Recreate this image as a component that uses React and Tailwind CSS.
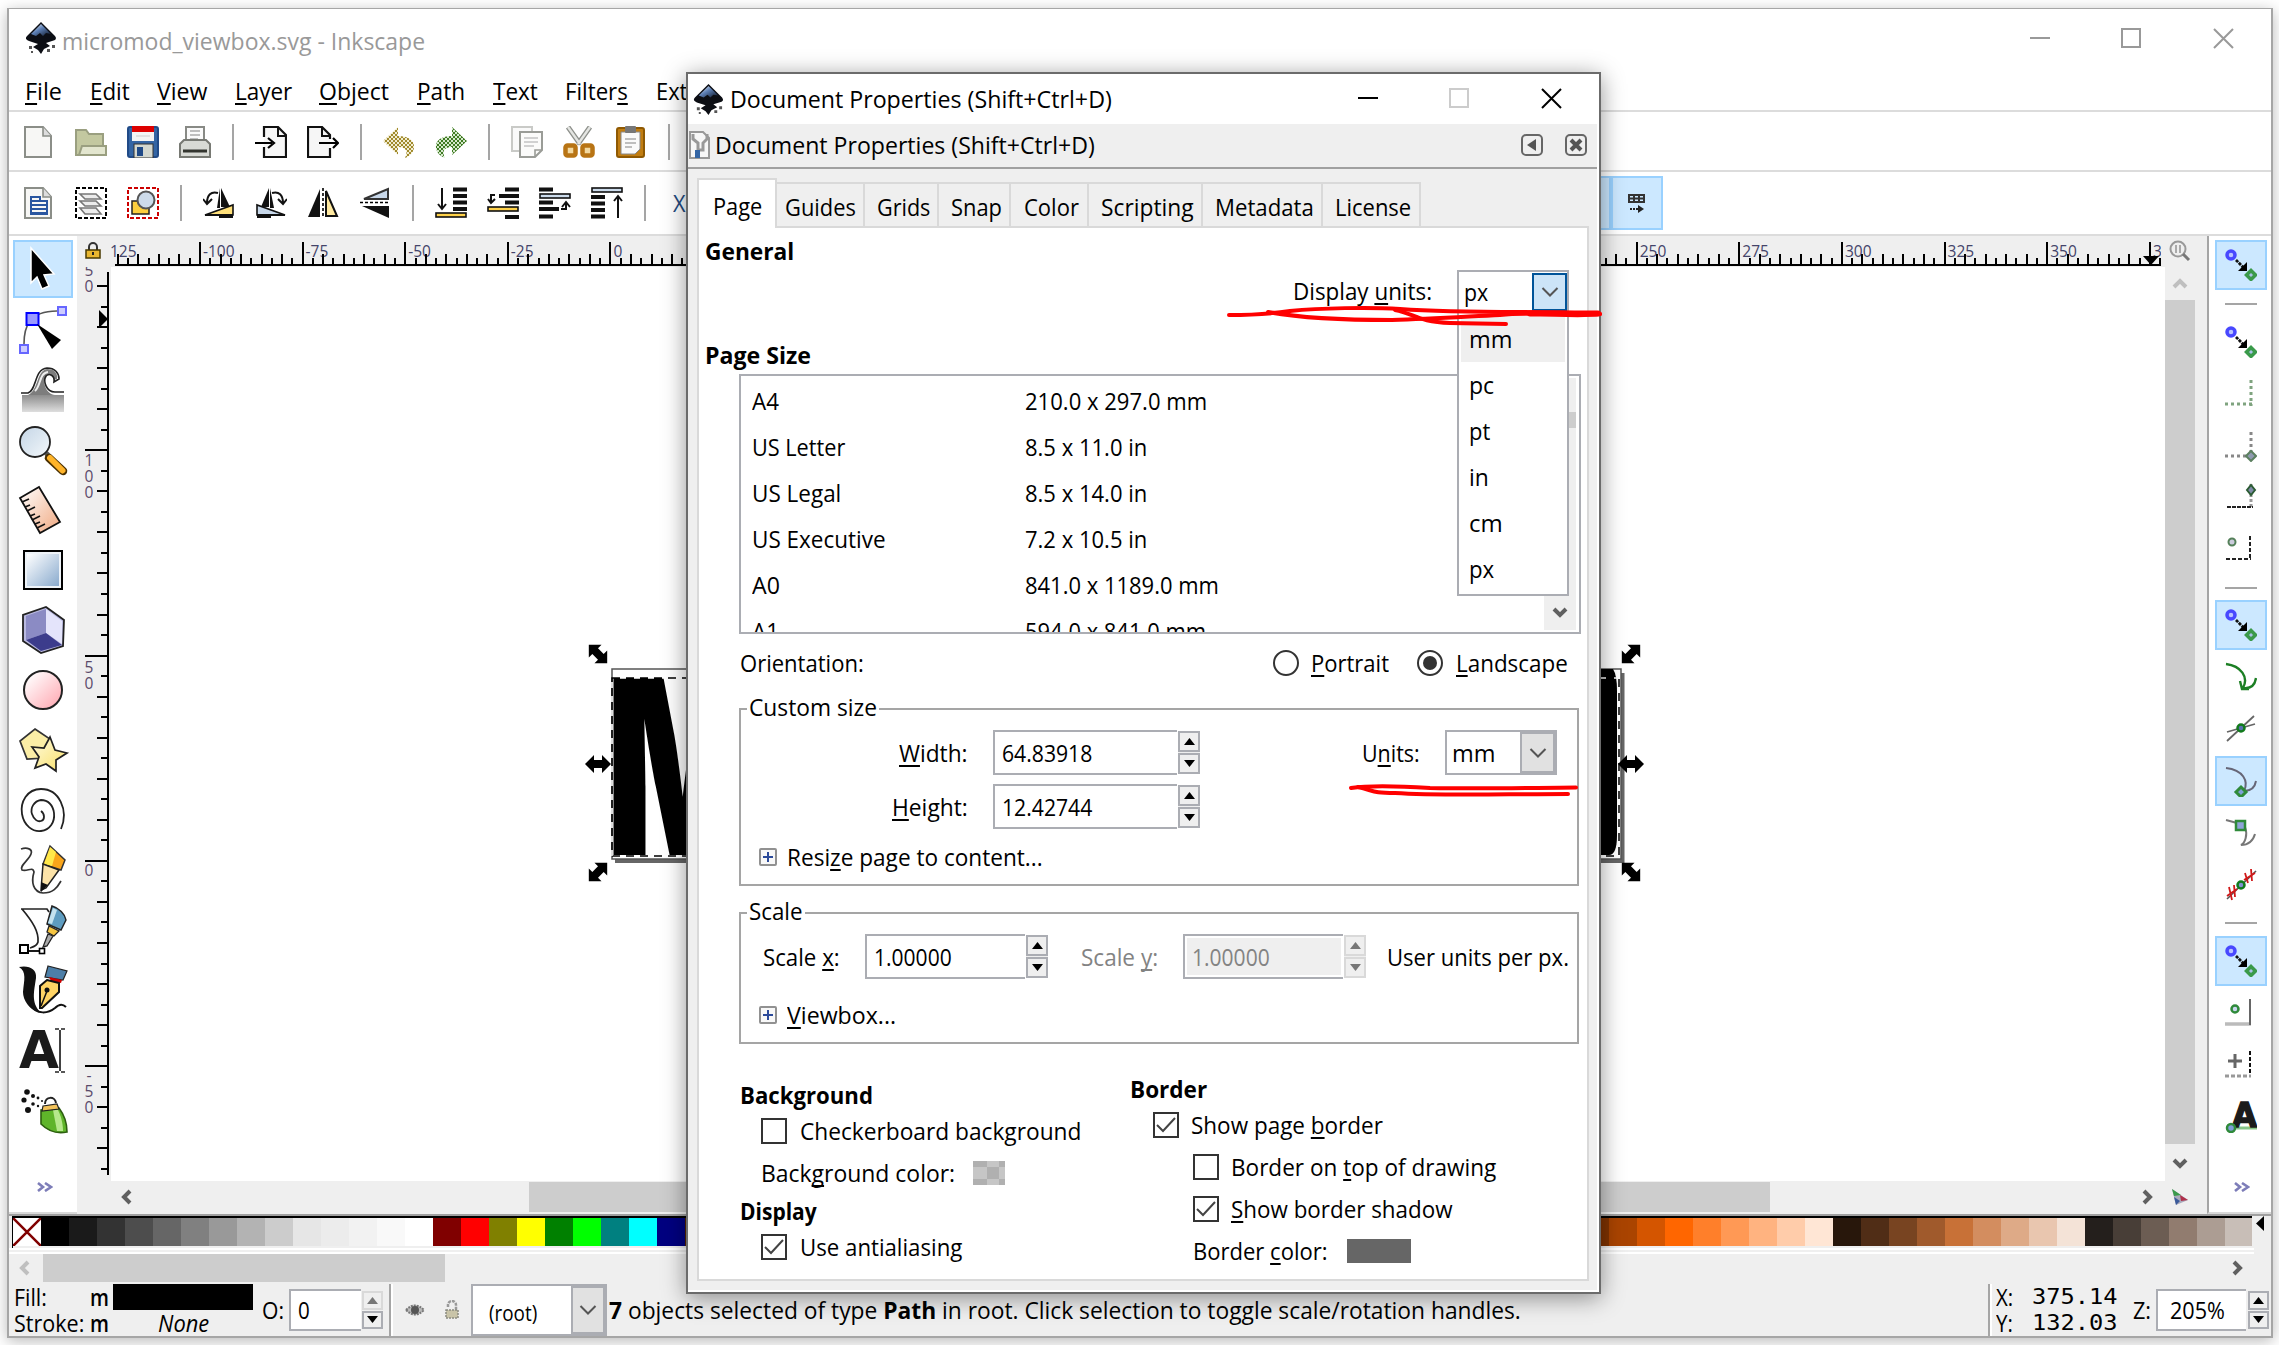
import React, { useLayoutEffect, useRef, useState } from "react";

/* Splits "_X" mnemonics into an underlined letter. */
function mnemonic(s) {
  const i = s.indexOf("_");
  if (i < 0 || s.startsWith("micromod")) return s;
  return (
    <>
      {s.slice(0, i)}
      <span className="underline decoration-2 underline-offset-[3px] [text-decoration-skip-ink:none]">{s[i + 1]}</span>
      {s.slice(i + 2)}
    </>
  );
}

/* Single-line label condensed or widened to a given width. */
function Fit({ w, children, className = "" }) {
  const ref = useRef(null);
  const [k, setK] = useState(1);
  useLayoutEffect(() => {
    const n = ref.current.offsetWidth;
    if (n) setK(w / n);
  }, [w]);
  return (
    <span className={"block shrink-0 whitespace-pre leading-[30px] " + className} style={{ width: w }}>
      <span ref={ref} className="inline-block origin-left" style={{ transform: `scaleX(${k})` }}>
        {typeof children === "string" ? mnemonic(children) : children}
      </span>
    </span>
  );
}

function Logo({ s = 34 }) {
  return (
    <svg width={s} height={s} viewBox="0 0 34 34" className="shrink-0">
      <defs>
        <linearGradient id="lg" x1="0" y1="0" x2="1" y2="1">
          <stop offset="0" stopColor="#fff" />
          <stop offset=".45" stopColor="#5c7fb5" />
          <stop offset="1" stopColor="#0b1220" />
        </linearGradient>
      </defs>
      <path d="M17 1 L31 15 Q34 19 28 20 L22 22 L26 25 L20 28 L17 33 L14 29 L9 26 L14 23 L5 20 Q0 18 3 15 Z" fill="#0c0e14" />
      <path d="M17 3 L27 13 L22 12 L19 15 L16 12 L12 15 L7 13 Z" fill="url(#lg)" />
      <path d="M5 25h3v3h-3z M28 24h3v3h-3z M23 28h3v3h-3z M7 30h2v2h-2z" fill="#555" />
    </svg>
  );
}

const I32 = ({ children }) => (
  <svg width="32" height="32" viewBox="0 0 32 32" fill="none" className="shrink-0">{children}</svg>
);

const Page = ({ x = 2 }) => (
  <g>
    <path d={`M${x} 1h18l8 9v21h-26z`} fill="#f7f7f5" stroke="#8b8e88" strokeWidth="2" />
    <path d={`M${x + 18} 1v9h8`} fill="#ddd" stroke="#8b8e88" strokeWidth="1.6" />
  </g>
);

const cmd = {
  new: <I32><Page /></I32>,
  open: <I32><path d="M1 29V4h10l3 4h14v21z" fill="#c3c8a0" stroke="#9a9f80" strokeWidth="2" /><path d="M4 29l3-9h24v9z" fill="#e3e6cf" stroke="#9a9f80" strokeWidth="2" /></I32>,
  save: <I32><rect x="1" y="1" width="30" height="30" rx="2" fill="#3465a4" stroke="#204a87" strokeWidth="2" /><rect x="5" y="1" width="22" height="14" fill="#f4f4f4" /><rect x="5" y="0" width="22" height="6" fill="#dd0000" /><path d="M9 10h14" stroke="#ccc" /><rect x="7" y="18" width="19" height="14" fill="#d3d7cf" stroke="#333" /><rect x="10" y="21" width="6" height="9" fill="#204a87" /></I32>,
  print: <I32><path d="M7 15V1h18v14" fill="#fafafa" stroke="#888a85" strokeWidth="2" /><path d="M11 5h10M11 9h10M11 13h8" stroke="#aaa" strokeWidth="1.5" /><path d="M1 31V18l4-4h22l4 4v13z" fill="#d8dad5" stroke="#777973" strokeWidth="2" /><path d="M4 25h24" stroke="#33352f" strokeWidth="3" /></I32>,
  imp: <I32><path d="M9 11V1h14l8 8v22H9V21" fill="#f6f6f6" stroke="#111" strokeWidth="2.2" /><path d="M23 1v9h8" stroke="#111" strokeWidth="2" /><path d="M0 17h17M13 12l6 5-6 5" stroke="#000" strokeWidth="2.2" /></I32>,
  exp: <I32><path d="M23 22v9H1V1h14l8 8v4" fill="#f6f6f6" stroke="#111" strokeWidth="2.2" /><path d="M15 1v9h8" stroke="#111" strokeWidth="2" /><path d="M12 17h18M26 12l5 5-5 5" stroke="#000" strokeWidth="2.2" /></I32>,
  undo: <I32><path d="M15 1v9c10 0 17 4 16 12-1 5-4 8-9 10 3-6 2-11-7-11v8L0 15z" fill="url(#hy)" /></I32>,
  redo: <I32><path d="M17 1v9C7 10 0 14 1 22c1 5 4 8 9 10-3-6-2-11 7-11v8l15-14z" fill="url(#hg)" /></I32>,
  copy: <I32><path d="M1 1h20v24H1z" fill="#fafafa" stroke="#c9cac7" strokeWidth="2" /><path d="M9 6h22v18l-7 7H9z" fill="#fbfbfa" stroke="#9a9c97" strokeWidth="2" /><path d="M13 12h14M13 16h14M13 20h10" stroke="#c4c4c4" strokeWidth="1.6" /><path d="M24 31v-7h7" stroke="#9a9c97" strokeWidth="1.6" /></I32>,
  cut: <I32><path d="M5 1l12 17M27 1L15 18" stroke="#8d908b" strokeWidth="5" /><path d="M5 1l12 17M27 1L15 18" stroke="#e4e5e2" strokeWidth="2.4" /><rect x="2.500" y="19.500" width="10" height="10" rx="2" fill="#f3d9a0" stroke="#b87414" strokeWidth="4.500" /><rect x="19.500" y="19.500" width="10" height="10" rx="2" fill="#f3d9a0" stroke="#b87414" strokeWidth="4.500" /></I32>,
  paste: <I32><rect x="2" y="2" width="27" height="29" rx="2" fill="#c17d11" stroke="#8f5902" strokeWidth="2" /><path d="M6 6h19v17l-5 5H6z" fill="#fafafa" stroke="#888" /><rect x="10" y="0" width="11" height="7" rx="1" fill="#777" /><path d="M10 13h11M10 17h11M10 21h7" stroke="#aaa" strokeWidth="1.5" /></I32>,
};

const ctl = {
  doc: <I32><Page /><path d="M8 10h9v4h7M8 14h16M8 18h16M8 22h16M8 26h16M8 9v18h16V13" stroke="#2a56a0" strokeWidth="2" /></I32>,
  layers: <I32><rect x="1" y="1" width="30" height="30" stroke="#000" strokeWidth="2" strokeDasharray="4 2" /><path d="M5 7h16l5 5H10z M5 14h16l5 5H10z M5 21h16l5 6H10z" fill="#ececec" stroke="#777" strokeWidth="1.6" /></I32>,
  objs: <I32><rect x="1" y="1" width="30" height="30" stroke="#c00" strokeWidth="2" strokeDasharray="4 2" /><rect x="5" y="14" width="17" height="13" fill="#fccf3e" stroke="#222" strokeWidth="1.5" /><circle cx="19" cy="13" r="8.5" fill="#cddbea" stroke="#555" strokeWidth="2" /></I32>,
  rl: <I32><path d="M18 1v19h9z" fill="#111" /><path d="M17 1v20h-3z" fill="#111" /><path d="M2 28L30 18v10z" fill="#ffe07a" stroke="#111" strokeWidth="1.6" /><path d="M2 27h28v2H2zM16 29h14v2H16z" fill="#111" /><path d="M15 6C8 4 4 8 4 16M0 12l4 5 5-5" stroke="#111" strokeWidth="2" /></I32>,
  rr: <I32><path d="M14 1v19H6z" fill="#111" /><path d="M15 1v20h4z" fill="#111" /><path d="M30 28L2 18v10z" fill="#c8d8ea" stroke="#111" strokeWidth="1.6" /><path d="M2 27h28v2H2zM2 29h14v2H2z" fill="#111" /><path d="M17 6c7-2 11 2 11 10M32 12l-4 5-5-5" stroke="#111" strokeWidth="2" /></I32>,
  fh: <I32><path d="M13 2v28H1z" fill="#111" /><path d="M19 4v25h11z" fill="#ffe9a0" stroke="#111" strokeWidth="2" /><path d="M16 1v30" stroke="#000" strokeWidth="1.6" strokeDasharray="3 2" /></I32>,
  fv: <I32><path d="M30 19v12L3 19z" fill="#111" /><path d="M29 2v10H5z" fill="#c8d8ea" stroke="#333" strokeWidth="2" /><path d="M1 15.5h30" stroke="#000" strokeWidth="1.6" strokeDasharray="3 2" /></I32>,
  bot: <I32><path d="M18 2.500h14M18 9h14M18 15.500h14M18 22h14" stroke="#111" strokeWidth="4" /><rect x="1" y="26" width="30" height="4" fill="#ffd24a" stroke="#111" strokeWidth="1.6" /><path d="M7 1v20M3 17l4 5 4-5" stroke="#111" strokeWidth="2" /></I32>,
  low: <I32><path d="M18 2.500h14M12 9h20M18 15.500h14M18 30h14" stroke="#111" strokeWidth="4" /><rect x="1" y="20" width="30" height="4" fill="#ffd24a" stroke="#111" strokeWidth="1.600" /><path d="M8 8H4v7M1 12l3 4 4-4" stroke="#111" strokeWidth="2" /></I32>,
  up: <I32><path d="M0 2.500h14M0 15.500h14M0 22h20M0 29.500h14" stroke="#111" strokeWidth="4" /><rect x="1" y="7" width="30" height="4" fill="#cddcec" stroke="#111" strokeWidth="1.6" /><path d="M22 22h5v-6M23 20l4-5 4 5" stroke="#111" strokeWidth="2" /></I32>,
  top: <I32><path d="M0 10h14M0 16.500h14M0 23h14M0 29.500h14" stroke="#111" strokeWidth="4" /><rect x="1" y="1" width="30" height="4" fill="#cddcec" stroke="#111" strokeWidth="1.6" /><path d="M27 31V10M23 14l4-5 4 5" stroke="#111" strokeWidth="2" /></I32>,
};

function Bar({ items, set }) {
  return items.map((n, i) =>
    n === "|" ? (
      <div key={i} className="flex w-6 justify-center"><div className="h-9 w-0.5 bg-[#a5a5a5]" /></div>
    ) : (
      <div key={i} className="flex w-[52px] justify-center">{set[n]}</div>
    )
  );
}

const I48 = ({ children }) => (
  <svg width="48" height="48" viewBox="0 0 48 48" fill="none" className="shrink-0 overflow-visible">{children}</svg>
);

const tools = [
  <I48><path d="M12 3V38L18 32L23 44L30 41L25 30L35 29Z" fill="#000" stroke="#fff" strokeWidth="1.5" /></I48>,
  <I48><path d="M5 38C5 22 9 5 38 5" stroke="#555" strokeWidth="1.6" /><rect x="7.500" y="7" width="12" height="12" fill="#9a9aff" stroke="#00f" strokeWidth="2" /><rect x="39" y="1" width="8" height="8" fill="#ccf" stroke="#66f" strokeWidth="2" /><rect x="1" y="39" width="8" height="8" fill="#ccf" stroke="#66f" strokeWidth="2" /><path d="M18 18L42 34L33 43Z" fill="#000" /></I48>,
  <I48><path d="M3 29H45V46H3Z" fill="url(#gw)" /><path d="M9 29C20 24 17 5 28 3C36 3 39 8 38 13L35 14C34 8 29 8 27 11C23 16 27 28 36 29Z" fill="#7d7d7d" /><path d="M2 27H9C18 24 15 3 28 2C36 2 40 7 40 13L35 16C36 9 30 7 27 10C24 15 27 26 36 26H45" stroke="#222" strokeWidth="1.600" /><path d="M16 25C22 20 20 7 29 6" stroke="#eee" strokeWidth="2" /></I48>,
  <I48><path d="M27 27L33 33" stroke="#555" strokeWidth="5" /><path d="M30 32L44 45" stroke="#4a3000" strokeWidth="8.500" strokeLinecap="round" /><path d="M31 32L43.500 44.500" stroke="#ffb42a" strokeWidth="6" strokeLinecap="round" /><circle cx="16" cy="16" r="15" fill="url(#gz)" stroke="#222" strokeWidth="1.800" /></I48>,
  <I48><path d="M1 12L20 1L41 36L21 47Z" fill="url(#gm)" stroke="#111" strokeWidth="1.800" /><path d="M3 16l7-3M6 21l5-2M8 25l8-4M11 30l5-2M13 34l8-4M16 38l5-2M18 42l8-4" stroke="#111" strokeWidth="1.600" /></I48>,
  <I48><rect x="5" y="5" width="38" height="38" fill="#eef3f8" stroke="#000" strokeWidth="2" /><rect x="8" y="8" width="32" height="32" fill="url(#gr)" /></I48>,
  <I48><path d="M27 1L45 14L44 40L22 47L4 35V9Z" fill="#b9b9e0" stroke="#222" strokeWidth="1.800" /><path d="M27 3V27L43 38V15Z" fill="#e4e4fb" /><path d="M27 3V27L7 34V10Z" fill="#8b8bc4" /><path d="M27 27L43 39L22 45L7 34Z" fill="#3c3c8c" /></I48>,
  <I48><circle cx="24" cy="24" r="19" fill="url(#gc)" stroke="#222" strokeWidth="2" /></I48>,
  <I48><path d="M16 3L31 13L26 32L8 33L1 15Z" fill="#fbeea6" stroke="#333" strokeWidth="1.700" /><path d="M31 11L36 24L48 27L37 34V45L27 38L16 42L20 31L13 21L25 22Z" fill="url(#gs)" stroke="#222" strokeWidth="1.700" /></I48>,
  <I48><path d="M42 43C50 24 40 3 22 3C8 3 1 16 3 28C5 40 14 46 22 45C31 44 36 36 35 27C34 19 29 14 22 14C15 15 11 22 13 28C15 34 19 36 22 35C26 34 26 28 22 25" stroke="#222" strokeWidth="1.800" /></I48>,
  <I48><path d="M2 3C8 1 14 3 12 8C10 14 0 20 3 24C8 26 14 20 15 26C12 36 14 46 24 47C34 47 38 42 42 35" stroke="#333" strokeWidth="1.700" /><path d="M31 0L46 14L42 24L24 18Z" fill="#f9a51a" stroke="#333" strokeWidth="1.500" /><path d="M31 1L37 6L33 20L25 18Z" fill="#ffe84a" /><path d="M24 18L40 24L27 42L22 44Z" fill="#fce3a8" stroke="#222" strokeWidth="1.500" /><path d="M22 36L29 39L22 46Z" fill="#111" /></I48>,
  <I48><path d="M2 3H28L30 6M3 3C14 16 20 26 19 36C18 40 14 41 11 42" stroke="#222" strokeWidth="1.700" /><path d="M33 0C40 2 46 8 47 14L42 24L28 18Z" fill="#5e9cc0" stroke="#222" strokeWidth="1.500" /><path d="M34 2L38 4L33 18L29 17Z" fill="#c4e2ee" /><path d="M30 20L40 25L35 30L28 26Z" fill="#f5c542" stroke="#222" strokeWidth="1.300" /><path d="M29 28L34 30L28 40L24 41Z" fill="#aaa" stroke="#222" strokeWidth="1.300" /><rect x="1" y="39" width="8" height="8" fill="#fff" stroke="#000" strokeWidth="2" /><rect x="20.500" y="42.500" width="5" height="5" fill="#fff" stroke="#000" strokeWidth="1.600" /><path d="M9 45H20" stroke="#000" strokeWidth="1.800" /></I48>,
  <I48><path d="M0 1C10 -1 18 3 17 12C15 26 12 36 21 46C10 44 4 34 4 26C5 14 8 6 0 1Z" fill="#111" /><path d="M10 38C18 50 30 47 36 42C40 38 44 38 47 41" stroke="#111" strokeWidth="2" /><path d="M29 0L48 5L44 14L26 11Z" fill="#4d7fa8" stroke="#222" strokeWidth="1.200" /><path d="M30 11L43 14L42 17L32 15Z" fill="#c00" /><path d="M28 14L40 17V26L23 42H21V20Z" fill="#ffd465" stroke="#111" strokeWidth="2" /><path d="M22 40L28 25" stroke="#111" strokeWidth="1.500" /><circle cx="28" cy="24" r="2.500" fill="#111" /></I48>,
  <I48><text x="0" y="42" textLength="40" lengthAdjust="spacingAndGlyphs" fontFamily="DejaVu Sans" fontWeight="700" fontSize="52" fill="#1b1b1b">A</text><path d="M41 4V45M36 3H40M42 3H46M36 46H40M42 46H46" stroke="#222" strokeWidth="1.700" /></I48>,
  <I48><path d="M22 24L40 22C46 30 48 40 48 46C38 48 30 46 22 38Z" fill="#5fb52a" stroke="#2d5f10" strokeWidth="1.600" /><path d="M34 24L39 24C43 32 44 40 44 45L38 45Z" fill="#b6e88c" /><path d="M24 20L38 18L40 23L23 25Z" fill="#f2c25a" stroke="#222" strokeWidth="1.200" /><path d="M26 18C26 10 36 10 37 17" stroke="#222" strokeWidth="2" /><g fill="#111"><circle cx="8" cy="6" r="2.800" /><circle cx="5" cy="14" r="2.600" /><circle cx="9" cy="24" r="3" /><circle cx="14" cy="10" r="2" /><circle cx="14" cy="18" r="1.800" /><circle cx="19" cy="12" r="1.400" /><circle cx="19" cy="20" r="1.200" /><circle cx="23" cy="15" r="1" /></g></I48>,
];

const SnapMain = (
  <I32><circle cx="6" cy="6" r="4" fill="#b9c3ff" stroke="#4848ff" strokeWidth="3.500" /><path d="M11 11L20 20" stroke="#111" strokeWidth="2.800" strokeDasharray="3 1" /><path d="M22 13V22H13Z" fill="#000" /><path d="M26 21.500L30.500 26L26 30.500L21.500 26Z" fill="#a9c0e8" stroke="#3a9a4a" strokeWidth="3.500" /></I32>
);
const g = "#2f8a3a";
const snaps = [
  ["on", SnapMain], ["|", "h-[25px]"],
  ["", SnapMain],
  ["", <I32><path d="M26 2V28M0 26H28" stroke="#7fa37f" strokeWidth="3" strokeDasharray="3 3" /></I32>],
  ["", <I32><path d="M26 2V26M0 26H26" stroke="#888" strokeWidth="3" strokeDasharray="3 3" /><path d="M26 21L31 26L26 31L21 26Z" fill="#8f9ab0" stroke="#5c8060" strokeWidth="2" /></I32>],
  ["", <I32><path d="M26 2V26" stroke="#999" strokeWidth="3" strokeDasharray="3 2" /><path d="M2 25H28" stroke="#222" strokeWidth="2" strokeDasharray="4 1" /><path d="M26 3L30 8L26 13L22 8Z" fill="#7f8aa8" stroke="#2c5c34" strokeWidth="2" /></I32>],
  ["", <I32><path d="M25 2V26M1 25H26" stroke="#222" strokeWidth="2" strokeDasharray="4 2" /><circle cx="7" cy="8" r="3.500" fill="#ccd" stroke="#55805a" strokeWidth="2" /></I32>],
  ["|", "h-[23px]"],
  ["on", SnapMain],
  ["", <I32><path d="M1 3C16 5 24 16 18 27C26 28 30 24 31 17M15 20L17 28L24 28" stroke="#1c7f24" strokeWidth="2.400" /></I32>],
  ["", <I32><path d="M2 28L29 3M2 19L30 11" stroke="#666" strokeWidth="1.800" /><circle cx="16" cy="15" r="3.500" fill="#5a6fb0" stroke="#117a1c" strokeWidth="2.500" /></I32>],
  ["on", <I32><path d="M1 3C18 5 24 16 19 26C26 26 30 22 31 16" stroke="#667" strokeWidth="2" /><path d="M16 22L21 27L16 32L11 27Z" fill="#7f9fd8" stroke={g} strokeWidth="3" /></I32>],
  ["", <I32><path d="M1 3L12 6M20 10C23 18 20 26 16 28C24 28 28 24 30 17" stroke="#777" strokeWidth="2" /><rect x="11" y="4" width="9" height="9" fill="#8fa3d8" stroke={g} strokeWidth="2.500" /></I32>],
  ["", <I32><path d="M2 30L31 2" stroke="#555" strokeWidth="1.600" /><path d="M4 18L7 31M9 16L10 28M2 27L12 20M20 4L23 14M26 0L27 12M19 11L30 4" stroke="#d01818" strokeWidth="1.800" /><circle cx="16" cy="16" r="3.500" fill="#7f8fd0" stroke="#117a1c" strokeWidth="2.500" /></I32>],
  ["|", "h-6"],
  ["on", SnapMain],
  ["", <I32><path d="M0 27H26" stroke="#bbb" strokeWidth="3.500" /><path d="M25 2V28" stroke="#666" strokeWidth="2" /><circle cx="10" cy="12" r="3.500" fill="#c9d6f0" stroke={g} strokeWidth="2.500" /></I32>],
  ["", <I32><path d="M25 2V28" stroke="#111" strokeWidth="2" strokeDasharray="4 2" /><path d="M0 27H26" stroke="#999" strokeWidth="3" strokeDasharray="4 2" /><path d="M10 5V19M3 12H17" stroke="#666" strokeWidth="3" /></I32>],
  ["", <I32><path d="M4 27H32" stroke="#86c586" strokeWidth="3" /><text x="7" y="26" textLength="25" lengthAdjust="spacingAndGlyphs" fontFamily="DejaVu Sans" fontWeight="700" fontSize="34" fill="#1b1b1b" stroke="#1b1b1b" strokeWidth="1.500">A</text><circle cx="6" cy="27" r="4" fill="#7f9fd8" stroke={g} strokeWidth="2.500" /></I32>],
];

const Chev = ({ d, c = "#606060" }) => (
  <svg width="16" height="16" viewBox="0 0 16 16" fill="none" className="shrink-0">
    <path d={{ l: "M11 2L5 8l6 6", r: "M5 2l6 6-6 6", u: "M2 11l6-6 6 6", d: "M2 5l6 6 6-6" }[d]} stroke={c} strokeWidth="4" />
  </svg>
);
const More = () => (
  <svg width="16" height="10" viewBox="0 0 16 10" fill="none"><path d="M1 1l5 4-5 4M8 1l6 4-6 4" stroke="#7d7db8" strokeWidth="2.600" /></svg>
);

function HRuler() {
  const ticks = [];
  for (let k = -8; k <= 191; k++) {
    const x = 89 + k * 10.262;
    const n = ((k % 10) + 10) % 10;
    ticks.push(<path key={k} d={`M${Math.round(x)} ${n === 0 ? 6 : n % 2 ? 22 : 18}V29`} stroke="#000" strokeWidth="2" />);
  }
  const labels = [-100, -75, -50, -25, 0, 250, 275, 300, 325, 350].map((m) => (
    <text key={m} x={89 + ((m + 100) / 25) * 102.62 + 3} y="21">{m}</text>
  ));
  return (
    <svg width="2054" height="31" viewBox="0 0 2054 31" fontFamily="Open Sans" fontSize="15.500" fill="#44446a">
      <text x="-1" y="21">125</text>
      {labels}
      <text x="2042" y="21">3</text>
      <g>{ticks}</g>
      <path d="M4 29H2050" stroke="#000" strokeWidth="2" />
      <path d="M2032 20h16l-8 9z" fill="#000" />
      <path d="M2050 0h4v31h-4z" fill="#efefef" />
    </svg>
  );
}

function VRuler() {
  const ticks = [];
  for (let k = 2; k <= 45; k++) {
    const y = -22 + k * 20.53;
    const long = k % 10 === 0;
    ticks.push(<path key={k} d={`M${long ? 8 : k % 2 ? 24 : 20} ${Math.round(y)}H31`} stroke="#000" strokeWidth="2" />);
  }
  const col = (s, y) => s.split("").map((c, i) => <text key={c + y + i} x="12" y={y + i * 15.9} textAnchor="middle">{c}</text>);
  return (
    <svg width="34" height="914" viewBox="0 0 34 914" fontFamily="Open Sans" fontSize="15.500" fill="#5a4a6a">
      {ticks}
      <path d="M31 5V908" stroke="#000" strokeWidth="2" />
      <path d="M22 43v18l9-9z" fill="#000" />
      {col("50", 9)}{col("100", 199)}{col("50", 406)}{col("0", 609)}{col("-50", 814)}
    </svg>
  );
}

function Canvas() {
  const handle = (x, y, r, key) => (
    <path key={key} transform={`translate(${x} ${y}) rotate(${r})`} d="M-13 0L-4 -9V-4H4V-9L13 0L4 9V4H-4V9Z" fill="#000" />
  );
  return (
    <svg width="2054" height="914" viewBox="0 0 2054 914" className="block bg-white">
      <path d="M504 594H1511.500V406" stroke="#666" strokeWidth="4" fill="none" />
      <rect x="501" y="402" width="1009" height="190" fill="#fff" stroke="#555" strokeWidth="1.500" />
      <g transform="translate(495 588) scale(.66 1)">
        <text x="0" y="0" fontFamily="Inter" fontWeight="900" fontSize="243">M</text>
      </g>
      <path d="M1470 402H1502Q1506 408 1506 424V568Q1506 588 1498 588H1470Z" fill="#000" />
      <rect x="501" y="411" width="1007" height="178" fill="none" stroke="#000" strokeWidth="1.500" strokeDasharray="8 6" />
      <rect x="501" y="411" width="1007" height="178" fill="none" stroke="#fff" strokeWidth="1.500" strokeDasharray="6 8" strokeDashoffset="6" />
      {[[487, 387, 45], [487, 497, 0], [487, 605, -45], [1520, 387, -45], [1520, 497, 0], [1520, 605, 45]].map((h, i) => handle(h[0], h[1], h[2], i))}
    </svg>
  );
}

const leftSw = ["bg-[#000]", "bg-[#1a1a1a]", "bg-[#333]", "bg-[#4d4d4d]", "bg-[#666]", "bg-[#808080]", "bg-[#999]", "bg-[#b3b3b3]", "bg-[#ccc]", "bg-[#e6e6e6]", "bg-[#ececec]", "bg-[#f2f2f2]", "bg-[#f9f9f9]", "bg-[#fff]", "bg-[#800000]", "bg-[#f00]", "bg-[#808000]", "bg-[#ff0]", "bg-[#008000]", "bg-[#0f0]", "bg-[#008080]", "bg-[#0ff]", "bg-[#000080]"];
const rightSw = ["bg-[#803300]", "bg-[#aa4400]", "bg-[#d45500]", "bg-[#ff6600]", "bg-[#ff7f2a]", "bg-[#ff9955]", "bg-[#ffb380]", "bg-[#ffccaa]", "bg-[#ffe6d5]", "bg-[#28170b]", "bg-[#502d16]", "bg-[#784421]", "bg-[#a05a2c]", "bg-[#c87137]", "bg-[#d38d5f]", "bg-[#deaa87]", "bg-[#e9c6af]", "bg-[#f4e3d7]", "bg-[#241f1c]", "bg-[#483e37]", "bg-[#6c5d53]", "bg-[#917c6f]", "bg-[#ac9d93]", "bg-[#c8beb7]"];

const Tri = ({ up, c }) => (
  <svg width="11" height="7" viewBox="0 0 11 7"><path d={up ? "M0 7L5.500 0L11 7Z" : "M0 0L5.500 7L11 0Z"} fill={c} /></svg>
);
function Spin({ off, upOff, narrow }) {
  const b = "flex flex-1 items-center justify-center border-2 ";
  return (
    <div className={"flex shrink-0 flex-col gap-px bg-[#efefef] " + (narrow ? "h-[38px] w-[21px]" : "h-[43px] w-[22px]")}>
      <div className={b + (off || upOff ? "border-[#d9d9d9]" : "border-[#abadb3]")}><Tri up c={off || upOff ? "#777" : "#000"} /></div>
      <div className={b + (off ? "border-[#d9d9d9]" : "border-[#abadb3]")}><Tri c={off ? "#777" : "#000"} /></div>
    </div>
  );
}
function Entry({ w, text, tw, off }) {
  return (
    <div className="flex h-[45px] shrink-0 items-center">
      <div className="flex h-[45px] items-center border-2 border-r-0 border-[#abadb3] bg-white p-[2px]" style={{ width: w }}>
        <div className={"flex h-full w-full items-center pl-[5px] " + (off ? "bg-[#efefef] text-[#838383]" : "")}><Fit w={tw}>{text}</Fit></div>
      </div>
      <div className="ml-px"><Spin off={off} /></div>
    </div>
  );
}
const Down = () => (
  <svg width="18" height="12" viewBox="0 0 18 12" fill="none"><path d="M1.500 2L9 9.500L16.500 2" stroke="#555" strokeWidth="2" /></svg>
);
function Check({ on }) {
  return (
    <div className="flex h-[26px] w-[26px] shrink-0 items-center justify-center border-2 border-[#333] bg-white">
      {on && <svg width="20" height="18" viewBox="0 0 20 18" fill="none"><path d="M1 9l6 6L19 2" stroke="#444" strokeWidth="2" /></svg>}
    </div>
  );
}
const Radio = ({ on }) => (
  <div className="flex h-[26px] w-[26px] shrink-0 items-center justify-center rounded-full border-2 border-[#333]">
    {on && <div className="h-[14px] w-[14px] rounded-full bg-[#333]" />}
  </div>
);
const Plus = () => (
  <div className="flex h-[18px] w-[18px] shrink-0 items-center justify-center rounded-[2px] border-2 border-[#919191] bg-[#f8f8f8]">
    <svg width="10" height="10"><path d="M5 0V10M0 5H10" stroke="#2b4a9a" strokeWidth="2" /></svg>
  </div>
);

const tabs = [["Guides", 88, 8, 71], ["Grids", 74, 12, 53], ["Snap", 72, 12, 51], ["Color", 78, 13, 55], ["Scripting", 114, 12, 93], ["Metadata", 120, 12, 99], ["License", 98, 12, 76]];
const sizes = [["A4", 27, "210.0 x 297.0 mm", 182], ["US Letter", 93, "8.5 x 11.0 in", 122], ["US Legal", 89, "8.5 x 14.0 in", 122], ["US Executive", 134, "7.2 x 10.5 in", 122], ["A0", 28, "841.0 x 1189.0 mm", 194], ["A1", 27, "594.0 x 841.0 mm", 181]];

function Dialog() {
  return (
    <div className="absolute left-[686px] top-[72px] flex h-[1222px] w-[915px] flex-col border-2 border-[#6b6b6b] bg-white text-black shadow-[0_4px_22px_rgba(0,0,0,0.42)]">
      <div className="flex h-[50px] shrink-0 items-center">
        <div className="ml-[4px]"><Logo s={33} /></div>
        <Fit w={382} className="ml-[5px]">Document Properties (Shift+Ctrl+D)</Fit>
        <svg width="210" height="24" viewBox="0 0 210 24" fill="none" className="ml-[243px]">
          <path d="M3 11H23" stroke="#000" strokeWidth="2" />
          <rect x="95" y="2" width="18" height="18" stroke="#ccc" strokeWidth="2" />
          <path d="M187 2L206 21M206 2L187 21" stroke="#000" strokeWidth="2" />
        </svg>
      </div>
      <div className="mr-[2px] flex h-[45px] shrink-0 items-center border-b-2 border-[#a0a0a0] bg-[#efefef] pb-[2px]">
        <svg width="24" height="28" viewBox="0 0 24 28" fill="none"><path d="M2 1h13l6 6v20H2z" fill="#f7f7f7" stroke="#999" strokeWidth="2" /><path d="M5 3v5l5 4v7h5v-7l4-4V3" stroke="#999" strokeWidth="3" /><path d="M7 19h5v8H7z" fill="#3465a4" /></svg>
        <Fit w={380} className="ml-[3px]">Document Properties (Shift+Ctrl+D)</Fit>
        <svg width="66" height="22" viewBox="0 0 66 22" fill="none" className="ml-[426px]">
          <rect x="1" y="1" width="20" height="20" rx="4" stroke="#666" strokeWidth="2" /><path d="M15 5V17L6 11Z" fill="#555" />
          <rect x="45" y="1" width="20" height="20" rx="4" stroke="#666" strokeWidth="2" /><path d="M50 6l10 10M60 6L50 16" stroke="#555" strokeWidth="4" />
        </svg>
      </div>
      <div className="mb-[2px] mr-[2px] flex flex-1 flex-col bg-[#efefef] pb-[9px] pl-[9px] pr-[8px] pt-[9px]">
        <div className="flex h-[48px] shrink-0 items-end">
          <div className="z-10 -mb-[2px] flex h-[50px] w-[80px] items-center border-2 border-b-0 border-[#d9d9d9] bg-white pl-[14px]"><Fit w={49} className="mt-[3px]">Page</Fit></div>
          {tabs.map((t) => (
            <div key={t[0]} className="flex h-[44px] items-center border-r-2 border-t-2 border-[#d9d9d9]" style={{ width: t[1], paddingLeft: t[2] }}>
              <Fit w={t[3]} className="mt-[4px]">{t[0]}</Fit>
            </div>
          ))}
        </div>
        <div className="flex flex-1 flex-col border-2 border-[#d9d9d9] bg-white pl-[6px]">
          <Fit w={89} className="mt-[8px] font-bold">General</Fit>
          <div className="mt-[4px] flex h-[41px] items-center">
            <Fit w={139} className="ml-[588px]">Display _units:</Fit>
            <div className="ml-[25px] flex h-[41px] w-[112px] items-center border-2 border-b-0 border-[#abadb3] pl-[5px]">
              <Fit w={24}>px</Fit>
              <div className="ml-auto flex h-[38px] w-[35px] items-center justify-center border-2 border-[#005499] bg-[#cce4f7]"><Down /></div>
            </div>
          </div>
          <Fit w={106} className="mt-[29px] font-bold">Page Size</Fit>
          <div className="ml-[34px] mt-[4px] flex h-[260px] w-[842px] shrink-0 border-2 border-[#abadb3]">
            <div className="flex flex-1 flex-col overflow-hidden pt-[2px]">
              {sizes.map((s) => (
                <div key={s[0]} className="flex h-[46px] shrink-0 items-center pl-[11px]">
                  <div className="w-[273px]"><Fit w={s[1]}>{s[0]}</Fit></div>
                  <Fit w={s[3]}>{s[2]}</Fit>
                </div>
              ))}
            </div>
            <div className="my-[2px] mr-[3px] flex w-[32px] flex-col items-center bg-[#efefef]">
              <div className="mt-[34px] h-[16px] w-full bg-[#cdcdcd]" />
              <div className="mb-[10px] mt-auto"><Chev d="d" /></div>
            </div>
          </div>
          <div className="ml-[35px] mt-[14px] flex h-[30px] items-center">
            <Fit w={124}>Orientation:</Fit>
            <div className="ml-[409px]"><Radio /></div>
            <Fit w={78} className="ml-[12px]">_Portrait</Fit>
            <div className="ml-[28px]"><Radio on /></div>
            <Fit w={112} className="ml-[13px]">_Landscape</Fit>
          </div>
          <div className="relative ml-[34px] mt-[30px] flex h-[178px] w-[840px] shrink-0 flex-col border-2 border-[#a5a5a5]">
            <span className="absolute -top-[18px] left-[6px] bg-white px-[2px]"><Fit w={128}>Custom size</Fit></span>
            <div className="mt-[20px] flex h-[45px] items-center">
              <Fit w={69} className="ml-[158px]">_Width:</Fit>
              <div className="ml-[25px]"><Entry w={184} text="64.83918" tw={90} /></div>
              <Fit w={58} className="ml-[162px]">U_nits:</Fit>
              <div className="ml-[25px] flex h-[45px] w-[112px] items-center border-2 border-[#abadb3] pl-[5px]">
                <Fit w={43}>mm</Fit>
                <div className="ml-auto flex h-[41px] w-[35px] items-center justify-center border-2 border-[#abadb3] bg-[#e1e1e1]"><Down /></div>
              </div>
            </div>
            <div className="mt-[9px] flex h-[45px] items-center">
              <Fit w={76} className="ml-[151px]">_Height:</Fit>
              <div className="ml-[25px]"><Entry w={184} text="12.42744" tw={90} /></div>
            </div>
            <div className="ml-[18px] mt-[13px] flex h-[30px] items-center gap-[10px]"><Plus /><Fit w={256}>Resi_ze page to content...</Fit></div>
          </div>
          <div className="relative ml-[34px] mt-[26px] flex h-[132px] w-[840px] shrink-0 flex-col border-2 border-[#a5a5a5]">
            <span className="absolute -top-[18px] left-[6px] bg-white px-[2px]"><Fit w={54}>Scale</Fit></span>
            <div className="mt-[20px] flex h-[45px] items-center">
              <Fit w={77} className="ml-[22px]">Scale _x:</Fit>
              <div className="ml-[25px]"><Entry w={160} text="1.00000" tw={78} /></div>
              <Fit w={77} className="ml-[33px] text-[#838383]">Scale _y:</Fit>
              <div className="ml-[25px]"><Entry w={160} text="1.00000" tw={78} off /></div>
              <Fit w={182} className="ml-[21px]">User units per px.</Fit>
            </div>
            <div className="ml-[18px] mt-[21px] flex h-[30px] items-center gap-[10px]"><Plus /><Fit w={109}>_Viewbox...</Fit></div>
          </div>
          <div className="ml-[35px] flex">
            <div className="flex w-[390px] flex-col">
              <Fit w={133} className="mt-[36px] font-bold">Background</Fit>
              <div className="ml-[21px] mt-[6px] flex h-[30px] items-center gap-[13px]"><Check /><Fit w={281}>Checkerboard background</Fit></div>
              <div className="ml-[21px] mt-[12px] flex h-[30px] items-center">
                <Fit w={194}>Back_ground color:</Fit>
                <div className="ml-[18px] grid h-6 w-8 grid-cols-[14px_12px_6px] grid-rows-[6px_12px_6px]">
                  {["bg-[#b0b0b0]", "bg-[#c6c6c6]", "bg-[#b0b0b0]", "bg-[#c6c6c6]", "bg-[#b0b0b0]", "bg-[#c6c6c6]", "bg-[#b0b0b0]", "bg-[#c6c6c6]", "bg-[#b0b0b0]"].map((c, i) => <div key={i} className={c} />)}
                </div>
              </div>
              <Fit w={77} className="mt-[8px] font-bold">Display</Fit>
              <div className="ml-[21px] mt-[6px] flex h-[30px] items-center gap-[13px]"><Check on /><Fit w={162}>Use antialiasing</Fit></div>
            </div>
            <div className="flex flex-col">
              <Fit w={77} className="mt-[30px] font-bold">Border</Fit>
              <div className="ml-[23px] mt-[6px] flex h-[30px] items-center gap-[12px]"><Check on /><Fit w={192}>Show page _border</Fit></div>
              <div className="ml-[63px] mt-[12px] flex h-[30px] items-center gap-[12px]"><Check /><Fit w={265}>Border on _top of drawing</Fit></div>
              <div className="ml-[63px] mt-[12px] flex h-[30px] items-center gap-[12px]"><Check on /><Fit w={222}>_Show border shadow</Fit></div>
              <div className="ml-[63px] mt-[12px] flex h-[30px] items-center"><Fit w={135}>Border _color:</Fit><div className="ml-[19px] h-6 w-16 bg-[#666]" /></div>
            </div>
          </div>
        </div>
      </div>
    </div>
  );
}

export default function App() {
  return (
    <div className="relative h-[1345px] w-[2279px] overflow-hidden bg-white font-['Open_Sans',sans-serif] text-[24px] text-black">
      <svg width="0" height="0" className="absolute">
        <defs>
          <pattern id="hy" width="4" height="4" patternUnits="userSpaceOnUse"><rect width="4" height="4" fill="#f2ecd0" /><path d="M0 0h2v2H0zM2 2h2v2H2z" fill="#a08a2c" /></pattern>
          <pattern id="hg" width="4" height="4" patternUnits="userSpaceOnUse"><rect width="4" height="4" fill="#d5e8cc" /><path d="M0 0h2v2H0zM2 2h2v2H2z" fill="#3f7a22" /></pattern>
          <linearGradient id="gw" x1="0" y1="0" x2="0" y2="1"><stop offset="0" stopColor="#8d8d8d" /><stop offset="1" stopColor="#dedede" /></linearGradient>
          <linearGradient id="gz" x1="0" y1="0" x2="1" y2="1"><stop offset="0" stopColor="#c5d6e6" /><stop offset=".5" stopColor="#dbe6f0" /><stop offset="1" stopColor="#f4f8fb" /></linearGradient>
          <linearGradient id="gm" x1="0" y1="0" x2="1" y2="1"><stop offset="0" stopColor="#fff" /><stop offset="1" stopColor="#f0a880" /></linearGradient>
          <linearGradient id="gr" x1="0" y1="0" x2="1" y2="1"><stop offset="0" stopColor="#fff" /><stop offset="1" stopColor="#8aabce" /></linearGradient>
          <linearGradient id="gc" x1="0" y1="0" x2="1" y2="1"><stop offset=".1" stopColor="#fff" /><stop offset="1" stopColor="#ffa3ad" /></linearGradient>
          <linearGradient id="gs" x1="0" y1="0" x2="1" y2="1"><stop offset="0" stopColor="#fffbe0" /><stop offset="1" stopColor="#f9e067" /></linearGradient>
        </defs>
      </svg>
      <div className="ml-[7px] mt-[8px] flex h-[1330px] w-[2266px] flex-col border-2 border-t border-[#a6a6a6] bg-[#efefef] shadow-[0_3px_14px_rgba(0,0,0,0.28)]">
        <div className="flex h-[61px] shrink-0 items-center bg-white text-[#999]">
          <div className="ml-[15px] mt-[-3px]"><Logo /></div>
          <Fit w={363} className="ml-[4px] mt-[2px]">micromod_viewbox.svg - Inkscape</Fit>
          <svg width="210" height="24" viewBox="0 0 210 24" fill="none" className="ml-[1604px] mt-[-2px]">
            <path d="M1 11H21" stroke="#999" strokeWidth="2" /><rect x="93" y="2" width="18" height="18" stroke="#999" strokeWidth="2" /><path d="M185 2L204 21M204 2L185 21" stroke="#999" strokeWidth="2" />
          </svg>
        </div>
        <div className="flex h-[42px] shrink-0 items-center gap-[27.6px] border-b-2 border-[#dcdcdc] bg-white pl-[16px] pt-[2px]">
          <Fit w={37}>_File</Fit><Fit w={40}>_Edit</Fit><Fit w={50}>_View</Fit><Fit w={57}>_Layer</Fit><Fit w={70}>_Object</Fit><Fit w={48}>_Path</Fit><Fit w={45}>_Text</Fit><Fit w={63}>Filter_s</Fit><Fit w={31}>Ext</Fit>
        </div>
        <div className="flex h-[60px] shrink-0 items-center border-b-2 border-[#dcdcdc] bg-white pl-[4px] pt-[2px]">
          <Bar set={cmd} items={["new", "open", "save", "print", "|", "imp", "exp", "|", "undo", "redo", "|", "copy", "cut", "paste", "|"]} />
        </div>
        <div className="flex h-[64px] shrink-0 items-center border-b-2 border-[#dcdcdc] bg-white pl-[4px]">
          <Bar set={ctl} items={["doc", "layers", "objs", "|", "rl", "rr", "fh", "fv", "|", "bot", "low", "up", "top", "|"]} />
          <Fit w={18} className="ml-[16px] text-[#234a80]">X:</Fit>
          <div className="ml-[868px] h-[54px] w-[52px] border-2 border-[#99d1ff] bg-[#cce8ff]" />
          <div className="flex h-[54px] w-[52px] items-center justify-center border-2 border-[#99d1ff] bg-[#cce8ff]">
            <svg width="20" height="20" viewBox="0 0 20 20" fill="none"><path d="M1 2h17M1 9h17M2 1v9M7 1v9M12 1v9M17 1v9M1 5.500h17" stroke="#333" strokeWidth="2" /><path d="M3 16h8" stroke="#222" strokeWidth="2" strokeDasharray="2 1" /><path d="M11 12l6 4-6 4z" fill="#222" /></svg>
          </div>
        </div>
        <div className="flex h-[978px] shrink-0">
          <div className="flex w-[68px] shrink-0 flex-col items-center border-b-2 border-[#d9d9d9] bg-white pt-[4px]">
            {tools.map((t, i) => (
              <div key={i} className={"mb-[2px] flex h-[58px] w-[60px] shrink-0 items-center justify-center " + (i === 0 ? "bg-[#cce8ff] outline-2 -outline-offset-2 outline-[#99d1ff]" : "pt-[2px]")}>{t}</div>
            ))}
            <div className="ml-[3px] mt-[42px]"><More /></div>
          </div>
          <div className="flex flex-1 flex-col">
            <div className="flex h-[31px] shrink-0">
              <div className="flex w-[34px] justify-center pr-[2px] pt-[6px]">
                <svg width="18" height="18" viewBox="0 0 18 18" fill="none"><path d="M5 8V5a4 4 0 018 0v3" stroke="#333" strokeWidth="2" /><rect x="2" y="8" width="14" height="8" fill="#e9b62f" stroke="#4a3a00" strokeWidth="1.500" /><path d="M9 10v3" stroke="#222" strokeWidth="2" /></svg>
              </div>
              <HRuler />
              <svg width="42" height="31" viewBox="0 0 42 31" fill="none"><circle cx="13" cy="13" r="7.500" stroke="#999" strokeWidth="2" /><path d="M11 9v8M15 9v8" stroke="#aaa" strokeWidth="2" /><path d="M18 18l6 6" stroke="#777" strokeWidth="3" /></svg>
            </div>
            <div className="flex h-[914px] shrink-0">
              <VRuler />
              <Canvas />
              <div className="flex w-[30px] flex-col items-center">
                <div className="flex h-[33px] items-center"><Chev d="u" c="#bfbfbf" /></div>
                <div className="h-[844px] w-[30px] bg-[#cdcdcd]" />
                <div className="flex h-[37px] items-center"><Chev d="d" /></div>
              </div>
            </div>
            <div className="flex h-[32px] items-center pl-[42px]">
              <Chev d="l" />
              <div className="ml-[394px] h-[30px] w-[1241px] bg-[#cdcdcd]" />
              <div className="ml-[369px]"><Chev d="r" /></div>
              <svg width="18" height="18" viewBox="0 0 18 18" className="ml-[16px]"><path d="M1 1L17 12L5 17Z" fill="#aab" /><path d="M1 1L10 7L3 8Z" fill="#3a9a4a" /><path d="M9 7L17 12L10 13Z" fill="#b0304a" /><path d="M3 9L9 13L5 17Z" fill="#3a5a9a" /></svg>
            </div>
          </div>
          <div className="flex w-[64px] shrink-0 flex-col items-center border-b-2 border-l-2 border-b-[#d9d9d9] border-l-[#a5a5a5] bg-white pl-px pt-[3px]">
            {snaps.map((s, i) =>
              s[0] === "|" ? (
                <div key={i} className={"flex shrink-0 items-center " + s[1]}><div className="h-0.5 w-8 bg-[#a5a5a5]" /></div>
              ) : (
                <div key={i} className="flex h-[52px] shrink-0 items-center">
                  <div className={"flex h-[50px] w-[52px] items-center justify-center " + (s[0] ? "border-2 border-[#99d1ff] bg-[#cce8ff]" : "")}>{s[1]}</div>
                </div>
              )
            )}
            <div className="ml-[3px] mt-[39px]"><More /></div>
          </div>
        </div>
        <div className="flex h-[34px] shrink-0 border-t-2 border-[#a0a0a0]">
          <div className="ml-[3px] h-[32px] w-[2240px] overflow-hidden border-l border-t-2 border-black">
            <div className="flex h-[28px]">
              <svg width="28" height="28" viewBox="0 0 28 28" className="shrink-0 bg-white"><path d="M0 0L28 28M28 0L0 28" stroke="#800000" strokeWidth="2.500" /></svg>
              {leftSw.map((c) => <div key={c} className={"w-[28px] shrink-0 " + c} />)}
              <div className="w-[896px] shrink-0 bg-[#552200]" />
              {rightSw.map((c) => <div key={c} className={"w-[28px] shrink-0 " + c} />)}
            </div>
          </div>
          <svg width="10" height="16" viewBox="0 0 10 16" className="ml-[3px]"><path d="M9 0v15L1 7.500z" fill="#000" /></svg>
        </div>
        <div className="h-[6px] w-[2245px] shrink-0 border-y-2 border-white" />
        <div className="flex h-[28px] shrink-0 items-center">
          <div className="ml-[8px]"><Chev d="l" c="#bfbfbf" /></div>
          <div className="ml-[10px] h-[28px] w-[402px] bg-[#cdcdcd]" />
          <div className="ml-auto mr-[26px]"><Chev d="r" /></div>
        </div>
        <div className="flex flex-1 items-center pt-[2px]">
          <div className="ml-[5px] flex w-[99px] flex-col">
            <div className="flex h-[26px] items-center justify-between pr-[4px]"><Fit w={33}>Fill:</Fit><Fit w={19} className="font-semibold">m</Fit></div>
            <div className="flex h-[26px] items-center justify-between pr-[4px]"><Fit w={70}>Stroke:</Fit><Fit w={19} className="font-semibold">m</Fit></div>
          </div>
          <div className="flex w-[140px] flex-col items-center">
            <div className="h-[26px] w-[140px] bg-black" />
            <div className="flex h-[26px] items-center"><Fit w={51} className="italic">None</Fit></div>
          </div>
          <Fit w={22} className="ml-[9px]">O:</Fit>
          <div className="ml-[5px] flex h-[42px] w-[72px] items-center border-2 border-r-0 border-[#abadb3] bg-white pl-[7px]"><Fit w={12}>0</Fit></div>
          <div className="ml-px"><Spin narrow upOff /></div>
          <div className="ml-[6px] h-[52px] w-[4px] border-l-2 border-r-2 border-l-[#a5a5a5] border-r-white" />
          <svg width="22" height="16" viewBox="0 0 22 16" fill="none" className="ml-[11px]"><path d="M2 8Q11-1 20 8Q11 17 2 8Z" fill="#bbb" stroke="#777" strokeWidth="2" strokeDasharray="2 1" /><circle cx="11" cy="8" r="4" fill="#555" /></svg>
          <svg width="16" height="20" viewBox="0 0 16 20" fill="none" className="ml-[18px]"><path d="M4 7V5a4 4 0 018 0v5" stroke="#999" strokeWidth="2.500" strokeDasharray="3 1" /><rect x="2" y="10" width="12" height="8" fill="#c9c4a8" stroke="#8a8a80" strokeWidth="1.500" strokeDasharray="2 1" /></svg>
          <div className="ml-[11px] flex h-[52px] w-[136px] items-center border-2 border-[#abadb3] bg-white pl-[16px] text-[22px]">
            <Fit w={48} className="mt-[4px]">(root)</Fit>
            <div className="ml-auto flex h-[48px] w-[34px] items-center justify-center border-2 border-[#abadb3] bg-[#e1e1e1]"><Down /></div>
          </div>
          <Fit w={912} className="ml-[2px]"><><b>7</b> objects selected of type <b>Path</b> in root. Click selection to toggle scale/rotation handles.</></Fit>
          <div className="ml-auto h-[52px] w-[4px] border-l-2 border-r-2 border-l-[#a5a5a5] border-r-white" />
          <div className="ml-[4px] w-[36px]"><Fit w={17} className="!leading-[26px]">X:</Fit><Fit w={17} className="!leading-[26px]">Y:</Fit></div>
          <div className="w-[101px] font-['DejaVu_Sans_Mono',monospace] text-[22px]"><Fit w={85} className="!leading-[26px]">375.14</Fit><Fit w={85} className="!leading-[26px]">132.03</Fit></div>
          <Fit w={18}>Z:</Fit>
          <div className="ml-[5px] flex h-[42px] w-[90px] items-center border-2 border-r-0 border-[#abadb3] bg-white pl-[12px]"><Fit w={55}>205%</Fit></div>
          <div className="ml-[2px] mr-[2px]"><Spin narrow /></div>
        </div>
      </div>
      <Dialog />
      <div className="absolute left-[1457px] top-[311px] flex h-[285px] w-[112px] flex-col border-2 border-t border-[#abadb3] bg-white px-[2px] pt-[4px]">
        {[["mm", 43], ["pc", 25], ["pt", 21], ["in", 20], ["cm", 34], ["px", 25]].map((u, i) => (
          <div key={u[0]} className={"flex h-[46px] shrink-0 items-center pl-[8px] " + (i ? "" : "bg-[#efefef]")}><Fit w={u[1]}>{u[0]}</Fit></div>
        ))}
      </div>
      <svg width="400" height="500" viewBox="1220 300 400 500" fill="none" stroke="#f00" strokeWidth="4" strokeLinecap="round" className="absolute left-[1220px] top-[300px]">
        <path d="M1229 315C1250 315 1270 314 1290 311C1320 308 1370 307 1400 309C1440 312 1480 312 1522 312C1550 312 1580 313 1600 314" />
        <path d="M1268 312C1300 318 1340 320 1392 320C1430 319 1460 317 1500 315C1540 311 1570 318 1600 314" />
        <path d="M1395 310C1415 314 1418 322 1450 323L1506 324" />
        <path d="M1530 313.500H1598" strokeWidth="6" />
        <path d="M1351 788C1370 785 1400 786 1430 788C1480 789 1520 788 1576 787.500" />
        <path d="M1358 787C1375 791 1372 793 1395 793C1440 796 1500 794 1568 794" />
      </svg>
    </div>
  );
}
